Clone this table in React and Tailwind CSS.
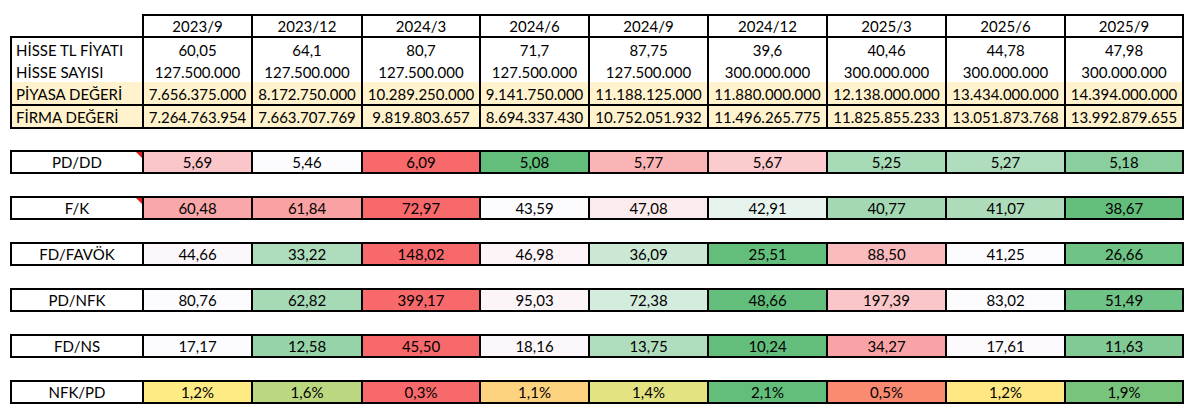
import React from "react";

const periods = ["2023/9", "2023/12", "2024/3", "2024/6", "2024/9", "2024/12", "2025/3", "2025/6", "2025/9"];

// column widths incl. left border (2px)
const widths = [
  "w-[109px]",
  "w-[110px]",
  "w-[118px]",
  "w-[109px]",
  "w-[119px]",
  "w-[119px]",
  "w-[119px]",
  "w-[119px]",
  "w-[118px]",
];

const topRows = [
  { label: "HİSSE TL FİYATI", vals: ["60,05", "64,1", "80,7", "71,7", "87,75", "39,6", "40,46", "44,78", "47,98"] },
  {
    label: "HİSSE SAYISI",
    vals: ["127.500.000", "127.500.000", "127.500.000", "127.500.000", "127.500.000", "300.000.000", "300.000.000", "300.000.000", "300.000.000"],
  },
  {
    label: "PİYASA DEĞERİ",
    yellow: true,
    vals: ["7.656.375.000", "8.172.750.000", "10.289.250.000", "9.141.750.000", "11.188.125.000", "11.880.000.000", "12.138.000.000", "13.434.000.000", "14.394.000.000"],
  },
];

const firma = ["7.264.763.954", "7.663.707.769", "9.819.803.657", "8.694.337.430", "10.752.051.932", "11.496.265.775", "11.825.855.233", "13.051.873.768", "13.992.879.655"];

const pdNfk = [80.76, 62.82, 399.17, 95.03, 72.38, 48.66, 197.39, 83.02, 51.49];

const ratios = [
  { label: "PD/DD", note: true, vals: [5.69, 5.46, 6.09, 5.08, 5.77, 5.67, 5.25, 5.27, 5.18] },
  { label: "F/K", note: true, vals: [60.48, 61.84, 72.97, 43.59, 47.08, 42.91, 40.77, 41.07, 38.67] },
  { label: "FD/FAVÖK", vals: [44.66, 33.22, 148.02, 46.98, 36.09, 25.51, 88.5, 41.25, 26.66] },
  { label: "PD/NFK", vals: pdNfk },
  { label: "FD/NS", vals: [17.17, 12.58, 45.5, 18.16, 13.75, 10.24, 34.27, 17.61, 11.63] },
  { label: "NFK/PD", pct: true, vals: pdNfk.map((v) => 100 / v) },
];

const RED = [248, 105, 107];
const WHITE = [252, 252, 255];
const GREEN = [99, 190, 123];
const YELLOW = [255, 235, 132];

const mix = (a, b, t) => `rgb(${a.map((x, i) => Math.round(x + (b[i] - x) * t)).join(",")})`;

// excel style 3-colour scale: min / median / max
const colorScale = (vals, lo, mid, hi) => {
  const sorted = [...vals].sort((a, b) => a - b);
  const min = sorted[0];
  const max = sorted[sorted.length - 1];
  const med = sorted[Math.floor(sorted.length / 2)];
  return vals.map((v) => {
    if (v <= med) return mix(lo, mid, med === min ? 1 : (v - min) / (med - min));
    return mix(mid, hi, (v - med) / (max - med));
  });
};

const fmt = (v, pct) => (pct ? v.toFixed(1).replace(".", ",") + "%" : v.toFixed(2).replace(".", ","));

const RatioRow = ({ row }) => {
  const colors = row.pct ? colorScale(row.vals, RED, YELLOW, GREEN) : colorScale(row.vals, GREEN, WHITE, RED);
  return (
    <div className="flex w-fit border-2 border-black h-[24px]">
      <div className="relative w-[130px] flex items-center justify-center bg-white">
        {row.label}
        {row.note && (
          <span className="absolute top-0 right-0 w-0 h-0 border-l-[6px] border-l-transparent border-t-[6px] border-t-[#e01b1b]"></span>
        )}
      </div>
      {row.vals.map((v, i) => (
        <div
          key={i}
          className={`${widths[i]} border-l-2 border-black flex items-center justify-center`}
          style={{ backgroundColor: colors[i] }}
        >
          {fmt(v, row.pct)}
        </div>
      ))}
    </div>
  );
};

export default function App() {
  return (
    <div className="w-[1200px] h-[413px] bg-white pt-[14px] pl-[10px] font-['Lato',sans-serif] text-[15px] leading-none text-black">
      {/* header */}
      <div className="flex w-fit ml-[132px] border-t-2 border-r-2 border-black">
        {periods.map((p, i) => (
          <div key={p} className={`${widths[i]} h-[20px] border-l-2 border-black flex items-center justify-center pt-[1px]`}>
            {p}
          </div>
        ))}
      </div>

      {/* top block */}
      <div className="flex flex-col w-fit border-2 border-black">
        {topRows.map((r) => (
          <div key={r.label} className={`flex h-[22px] ${r.yellow ? "bg-[#fff2cc]" : "bg-white"}`}>
            <div className="w-[130px] flex items-center pl-[4px] pt-[2px]">{r.label}</div>
            {r.vals.map((v, i) => (
              <div key={i} className={`${widths[i]} border-l-2 border-black flex items-center justify-center pt-[2px]`}>
                {v}
              </div>
            ))}
          </div>
        ))}
        <div className="flex h-[23px] border-t-2 border-black bg-[#fff2cc]">
          <div className="w-[130px] flex items-center pl-[4px] pt-[1px]">FİRMA DEĞERİ</div>
          {firma.map((v, i) => (
            <div key={i} className={`${widths[i]} border-l-2 border-black flex items-center justify-center pt-[1px]`}>
              {v}
            </div>
          ))}
        </div>
      </div>

      {/* ratios */}
      <div className="flex flex-col gap-[22px] mt-[21px]">
        {ratios.map((r) => (
          <RatioRow key={r.label} row={r} />
        ))}
      </div>
    </div>
  );
}
